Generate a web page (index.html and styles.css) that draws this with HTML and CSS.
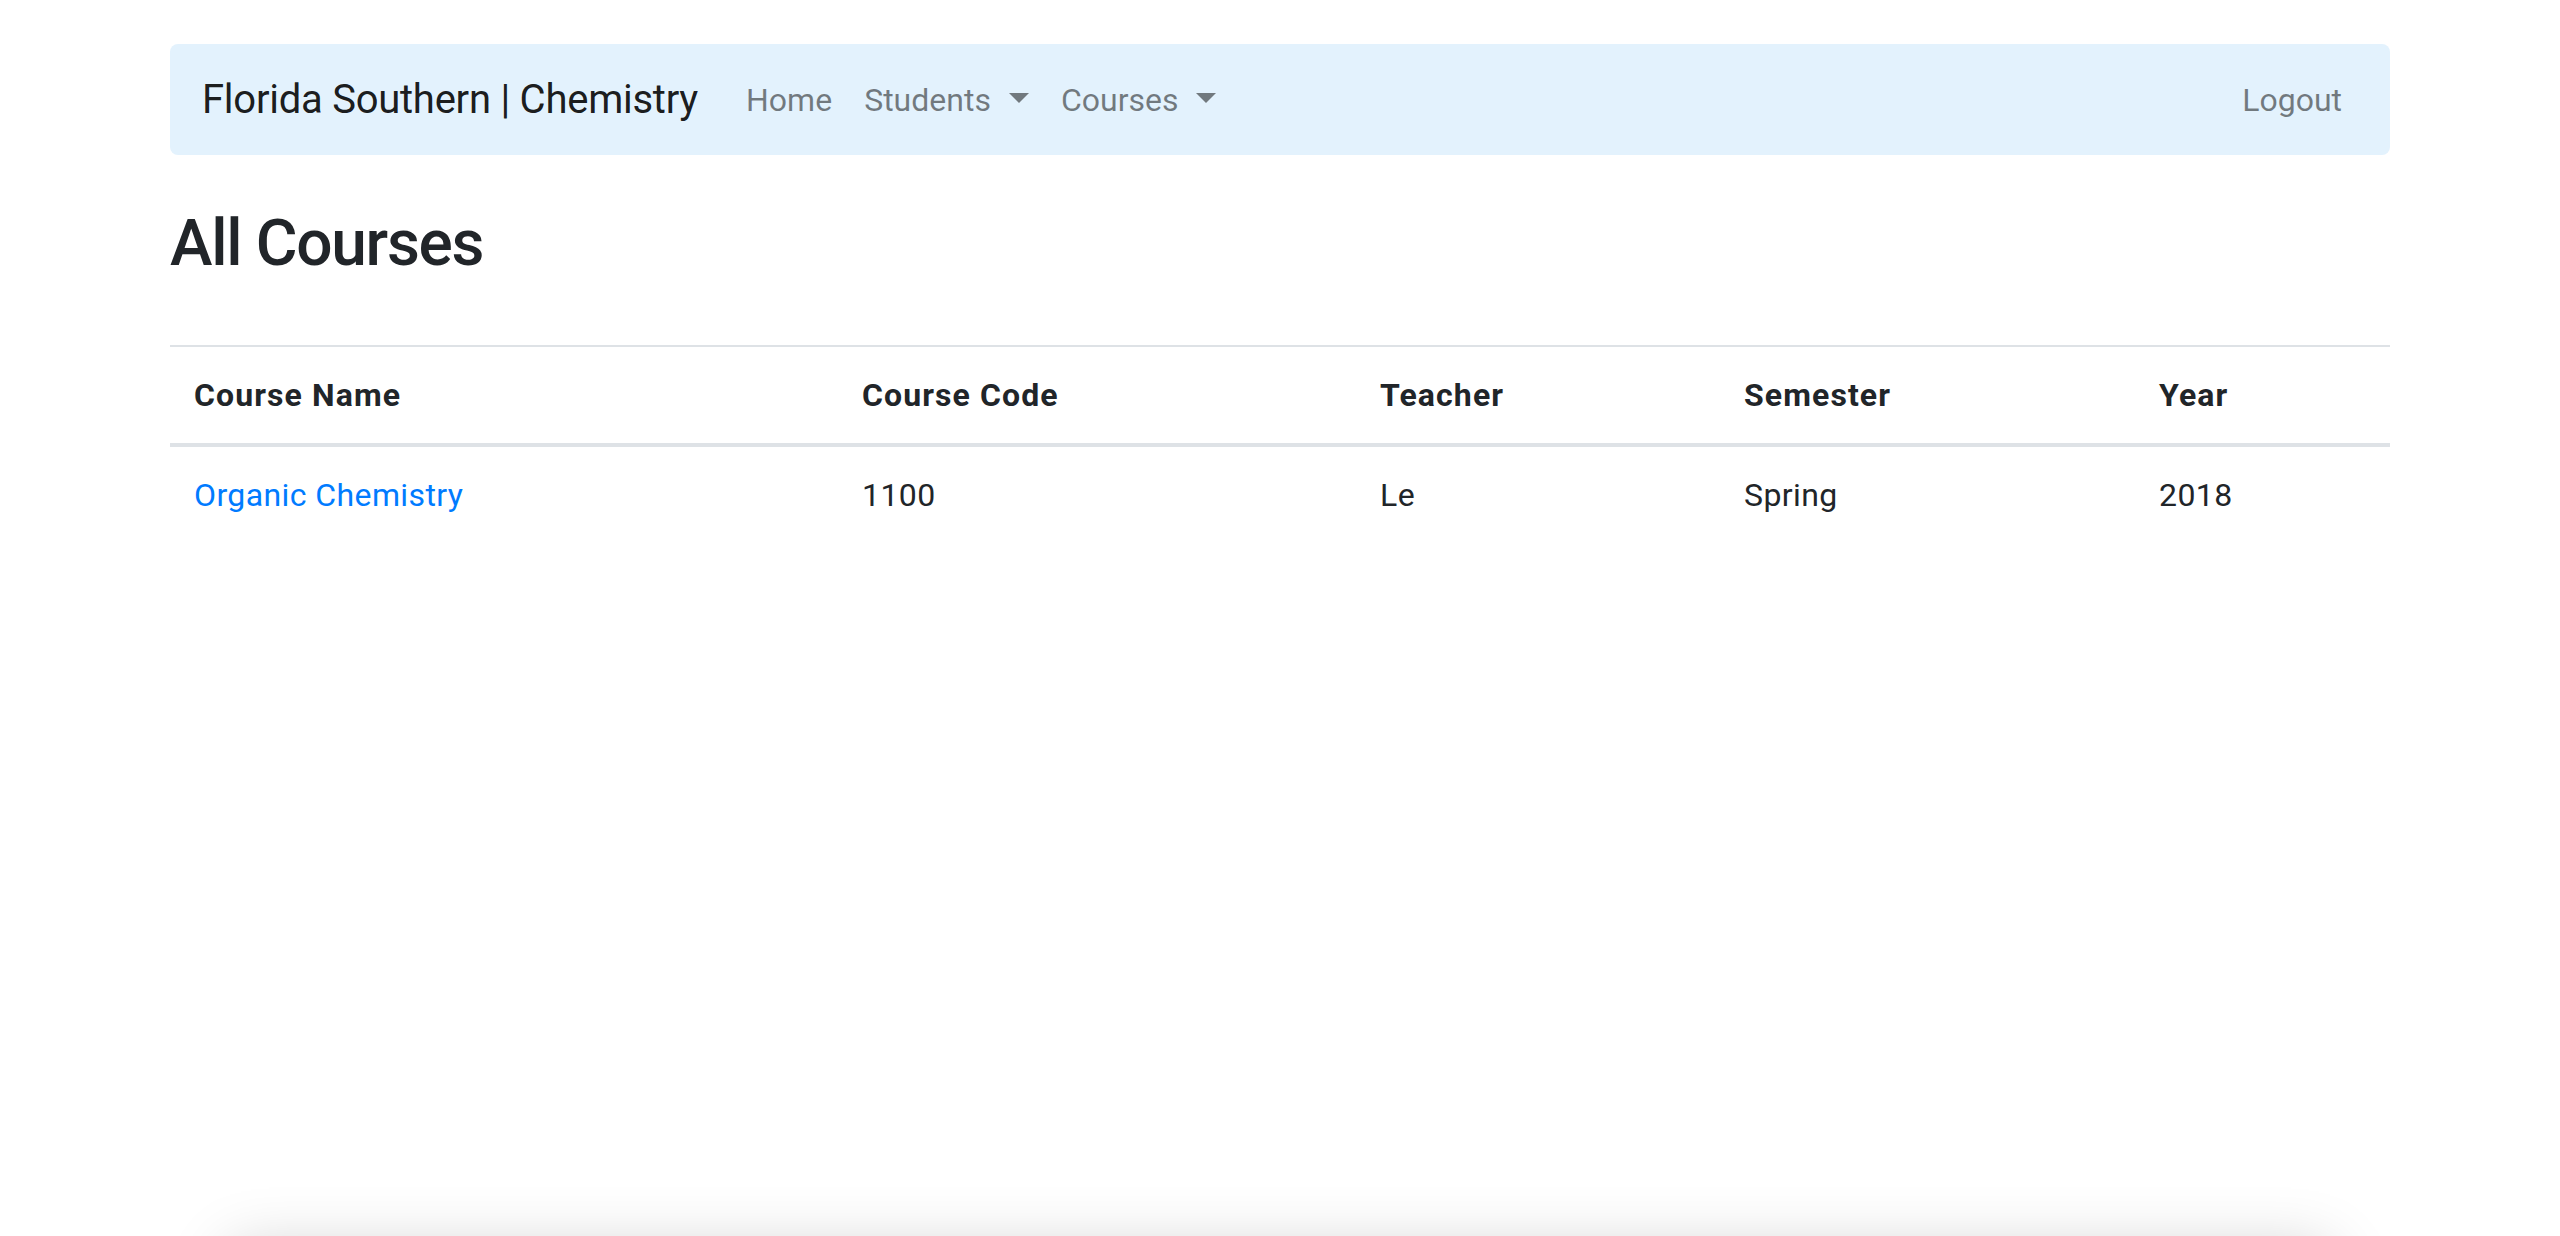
FILE: index.html
```html
<!DOCTYPE html>
<html lang="en">
<head>
<meta charset="utf-8">
<title>All Courses</title>
<link rel="stylesheet" href="styles.css">
</head>
<body>
<div class="page">
  <div class="container">
    <nav class="navbar">
      <a class="brand" href="#">Florida Southern | Chemistry</a>
      <ul class="nav">
        <li><a class="nav-link" href="#">Home</a></li>
        <li><a class="nav-link toggle" href="#">Students</a></li>
        <li><a class="nav-link toggle" href="#">Courses</a></li>
      </ul>
      <ul class="nav nav-right">
        <li><a class="nav-link" href="#">Logout</a></li>
      </ul>
    </nav>

    <h1 class="title">All Courses</h1>

    <table class="table">
      <thead>
        <tr>
          <th class="c-name">Course Name</th>
          <th class="c-code">Course Code</th>
          <th class="c-teacher">Teacher</th>
          <th class="c-sem">Semester</th>
          <th class="c-year">Year</th>
        </tr>
      </thead>
      <tbody>
        <tr>
          <td><a class="link" href="#">Organic Chemistry</a></td>
          <td>1100</td>
          <td>Le</td>
          <td>Spring</td>
          <td>2018</td>
        </tr>
      </tbody>
    </table>
  </div>
</div>
<footer class="footer"></footer>
</body>
</html>
```

FILE: styles.css
```css
* { box-sizing: border-box; }

html, body {
  margin: 0;
  padding: 0;
}

body {
  font-family: Roboto, Inter, "Liberation Sans", sans-serif;
  font-size: 32px;
  line-height: 1.5;
  color: #212529;
  background: #fff;
  overflow: hidden;
}

.page {
  min-height: 100vh;
  padding-top: 44px;
}

.container {
  width: 2220px;
  margin: 0 auto;
}

.navbar {
  display: flex;
  align-items: center;
  height: 111px;
  padding: 0 32px;
  background: #e3f2fd;
  border-radius: 8px;
}

.brand {
  font-size: 40px;
  line-height: 60px;
  letter-spacing: -0.25px;
  color: rgba(0, 0, 0, 0.9);
  text-decoration: none;
  margin-right: 32px;
  white-space: nowrap;
}

.nav {
  display: flex;
  list-style: none;
  margin: 0;
  padding: 0;
}

.nav-right {
  margin-left: auto;
}

.nav-link {
  display: block;
  padding: 16px;
  color: rgba(0, 0, 0, 0.5);
  text-decoration: none;
  line-height: 48px;
}

.toggle::after {
  content: "";
  display: inline-block;
  margin-left: 18px;
  vertical-align: 8px;
  border-top: 10px solid;
  border-right: 10px solid transparent;
  border-left: 10px solid transparent;
}

.title {
  font-size: 64px;
  font-weight: 500;
  line-height: 77px;
  letter-spacing: -1.3px;
  margin: 50px 0 63px;
}

.table {
  width: 100%;
  border-collapse: collapse;
  table-layout: fixed;
}

.table th,
.table td {
  padding: 24px;
  text-align: left;
  vertical-align: top;
  border-top: 2px solid #dee2e6;
  line-height: 48px;
  letter-spacing: 0.4px;
}

.table th {
  font-weight: 700;
  letter-spacing: 1.1px;
  border-bottom: 4px solid #dee2e6;
}

.table td {
  border-top: none;
}

.c-name { width: 668px; }
.c-code { width: 518px; }
.c-teacher { width: 364px; }
.c-sem { width: 415px; }
.c-year { width: 255px; }

.link {
  color: #007bff;
  text-decoration: none;
}

.footer {
  width: 2100px;
  height: 200px;
  margin: 14px auto 0;
  background: #fff;
  box-shadow: 0 0 60px 0 rgba(0, 0, 0, 0.2);
}
```
